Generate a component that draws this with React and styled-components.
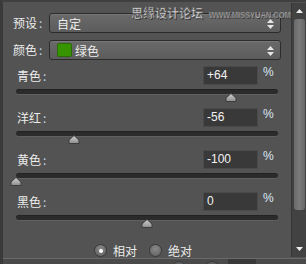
import React from "react";
import styled, { createGlobalStyle } from "styled-components";

const channels = [
  { title: "青色", value: 64 },
  { title: "洋红", value: -56 },
  { title: "黄色", value: -100 },
  { title: "黑色", value: 0 },
];

const GlobalStyle = createGlobalStyle`
  html, body {
    margin: 0;
    padding: 0;
    background: #535353;
  }
  body {
    font-family: "Noto Sans CJK SC", "Noto Sans", sans-serif;
    color: #ececec;
  }
`;

const Panel = styled.div`
  position: relative;
  width: 306px;
  height: 264px;
  box-sizing: border-box;
  background: #535353;
  border-left: 3px solid #3a3a3a;
  border-top: 2px solid #404040;
  display: flex;
  flex-direction: column;
  overflow: hidden;
`;

const Body = styled.div`
  flex: 1;
  display: flex;
`;

const Content = styled.div`
  flex: 1;
  display: flex;
  flex-direction: column;
  padding: 11px 0 0 10px;
`;

const SelectRow = styled.div`
  display: flex;
  align-items: center;
  height: 20px;
  margin-bottom: ${(p) => p.$gap || 0}px;
`;

const Label = styled.div`
  width: ${(p) => p.$width}px;
  font-size: 12px;
  line-height: 14px;
  white-space: nowrap;
  span {
    color: #bcd6ee;
    margin-left: 2px;
  }
`;

const Select = styled.div`
  width: 232px;
  height: 20px;
  box-sizing: border-box;
  border: 1px solid #2c2c2c;
  border-radius: 3px;
  background: linear-gradient(#6a6a6a, #5c5c5c);
  box-shadow: inset 0 1px 0 #777;
  display: flex;
  align-items: center;
  padding-left: 7px;
  gap: 3px;
  font-size: 12px;
  position: relative;
`;

const Swatch = styled.div`
  width: 15px;
  height: 14px;
  border-radius: 2px;
  background: #359400;
  border: 1px solid #2a6a08;
  box-sizing: border-box;
`;

const Spinner = styled.svg`
  position: absolute;
  right: 6px;
  top: 5px;
`;

const Sliders = styled.div`
  display: flex;
  flex-direction: column;
  margin-top: 6px;
  margin-left: 4px;
`;

const Block = styled.div`
  height: 42px;
  display: flex;
  flex-direction: column;
`;

const ValueRow = styled.div`
  width: 262px;
  height: 19px;
  display: flex;
  align-items: center;
`;

const ValueBox = styled.div`
  width: 55px;
  height: 19px;
  box-sizing: border-box;
  margin-left: auto;
  background: #393939;
  border: 1px solid #4a4a4a;
  font-family: "Liberation Sans", Arial, sans-serif;
  font-size: 12px;
  line-height: 17px;
  padding-left: 3px;
  color: #f2f2f2;
`;

const Percent = styled.div`
  width: 21px;
  padding-left: 5px;
  box-sizing: border-box;
  font-family: "Liberation Sans", Arial, sans-serif;
  font-size: 12px;
  color: #dce8f4;
  align-self: flex-start;
  margin-top: -1px;
`;

const Track = styled.div`
  position: relative;
  margin: 4px 0 0 -1px;
  width: 262px;
  height: 5px;
  box-sizing: border-box;
  border-radius: 3px;
  background: #2b2b2b;
  border-top: 1px solid #222;
  box-shadow: 0 1px 0 #606060;
`;

const Thumb = styled.svg`
  position: absolute;
  top: 3px;
  transform: translateX(-6px);
`;

const Radios = styled.div`
  display: flex;
  align-items: center;
  padding-left: 81px;
  height: 15px;
  margin-top: 9px;
  gap: 12px;
`;

const RadioItem = styled.div`
  display: flex;
  align-items: center;
  gap: 6px;
  font-size: 12px;
`;

const RadioDot = styled.div`
  width: 13px;
  height: 13px;
  box-sizing: border-box;
  border-radius: 50%;
  border: 1px solid #3a3a3a;
  background: radial-gradient(circle at 50% 35%, #8a8a8a, #5d5d5d);
  display: flex;
  align-items: center;
  justify-content: center;
  &::after {
    content: "";
    display: ${(p) => (p.$checked ? "block" : "none")};
    width: 4px;
    height: 4px;
    border-radius: 50%;
    background: #fff;
  }
`;

const Scrollbar = styled.div`
  width: 15px;
  margin-top: 1px;
  margin-bottom: 1px;
  background: #424242;
  border-left: 1px solid #353535;
  box-sizing: border-box;
  display: flex;
  flex-direction: column;
  align-items: center;
`;

const ScrollArrow = styled.div`
  height: 16px;
  display: flex;
  align-items: center;
  justify-content: center;
`;

const ScrollThumb = styled.div`
  width: 11px;
  height: 191px;
  border-radius: 3px;
  background: linear-gradient(90deg, #6a6a6a, #7a7a7a 50%, #676767);
`;

const ScrollRest = styled.div`
  flex: 1;
`;

const Footer = styled.div`
  height: 6px;
  border-top: 1px solid #6a6a6a;
  background: #4a4a4a;
  position: relative;
  display: flex;
  align-items: flex-start;
`;

const FooterDark = styled.div`
  margin-left: 225px;
  width: 28px;
  height: 6px;
  background: #383838;
`;

const FooterKnob = styled.div`
  position: absolute;
  top: 2px;
  left: ${(p) => p.$x}px;
  width: 12px;
  height: 12px;
  border-radius: 50%;
  border: 1px solid #3a3a3a;
  background: #5e5e5e;
`;

const Watermark = styled.div`
  position: absolute;
  top: 3px;
  left: 128px;
  display: flex;
  align-items: flex-end;
  gap: 6px;
  white-space: nowrap;
  pointer-events: none;
  color: #d8d8d8;
  -webkit-text-stroke: 0.6px #5a5a5a;
  text-shadow: 1px 1px 0 #3a3a3a;
`;

const WmCn = styled.div`
  font-size: 12px;
  font-weight: 700;
  line-height: 16px;
  flex-shrink: 0;
`;

const WmEn = styled.div`
  width: 82px;
  font-family: "Liberation Sans", Arial, sans-serif;
  font-size: 9px;
  font-weight: 700;
  line-height: 12px;
  flex-shrink: 0;
  transform: scaleX(0.83);
  transform-origin: left center;
`;

function UpDown() {
  return (
    <Spinner width="7" height="10" viewBox="0 0 7 10">
      <path d="M3.5 0 L7 4 L0 4 Z M0 6 L7 6 L3.5 10 Z" fill="#e6e6e6" />
    </Spinner>
  );
}

function SliderThumb({ value }) {
  const pct = ((value + 100) / 200) * 100;
  return (
    <Thumb width="12" height="9" viewBox="0 0 12 9" style={{ left: `${pct}%` }}>
      <defs>
        <linearGradient id="tg" x1="0" y1="0" x2="0" y2="1">
          <stop offset="0" stopColor="#d4d4d4" />
          <stop offset="1" stopColor="#8c8c8c" />
        </linearGradient>
      </defs>
      <path d="M6 0.5 L11 5 L11 8.5 L1 8.5 L1 5 Z" fill="url(#tg)" stroke="#3c3c3c" strokeWidth="1" />
    </Thumb>
  );
}

const App = () => {
  return (
    <>
      <GlobalStyle />
      <Panel>
        <Body>
          <Content>
            <SelectRow $gap={7}>
              <Label $width={36}>
                预设<span>:</span>
              </Label>
              <Select>
                自定
                <UpDown />
              </Select>
            </SelectRow>
            <SelectRow>
              <Label $width={36}>
                颜色<span>:</span>
              </Label>
              <Select>
                <Swatch />
                绿色
                <UpDown />
              </Select>
            </SelectRow>
            <Sliders>
              {channels.map((item) => (
                <Block key={item.title}>
                  <ValueRow>
                    <Label $width={40}>
                      {item.title}
                      <span>:</span>
                    </Label>
                    <ValueBox>{item.value > 0 ? `+${item.value}` : item.value}</ValueBox>
                    <Percent>%</Percent>
                  </ValueRow>
                  <Track>
                    <SliderThumb value={item.value} />
                  </Track>
                </Block>
              ))}
            </Sliders>
            <Radios>
              <RadioItem>
                <RadioDot $checked />
                相对
              </RadioItem>
              <RadioItem>
                <RadioDot />
                绝对
              </RadioItem>
            </Radios>
          </Content>
          <Scrollbar>
            <ScrollArrow>
              <svg width="7" height="4" viewBox="0 0 7 4">
                <path d="M3.5 0 L7 4 L0 4 Z" fill="#eee" />
              </svg>
            </ScrollArrow>
            <ScrollThumb />
            <ScrollRest />
            <ScrollArrow>
              <svg width="7" height="4" viewBox="0 0 7 4">
                <path d="M0 0 L7 0 L3.5 4 Z" fill="#eee" />
              </svg>
            </ScrollArrow>
          </Scrollbar>
        </Body>
        <Footer>
          <FooterKnob $x={169} />
          <FooterKnob $x={202} />
          <FooterDark />
        </Footer>
        <Watermark>
          <WmCn>思缘设计论坛</WmCn>
          <WmEn>WWW.MISSYUAN.COM</WmEn>
        </Watermark>
      </Panel>
    </>
  );
};

export default App;
